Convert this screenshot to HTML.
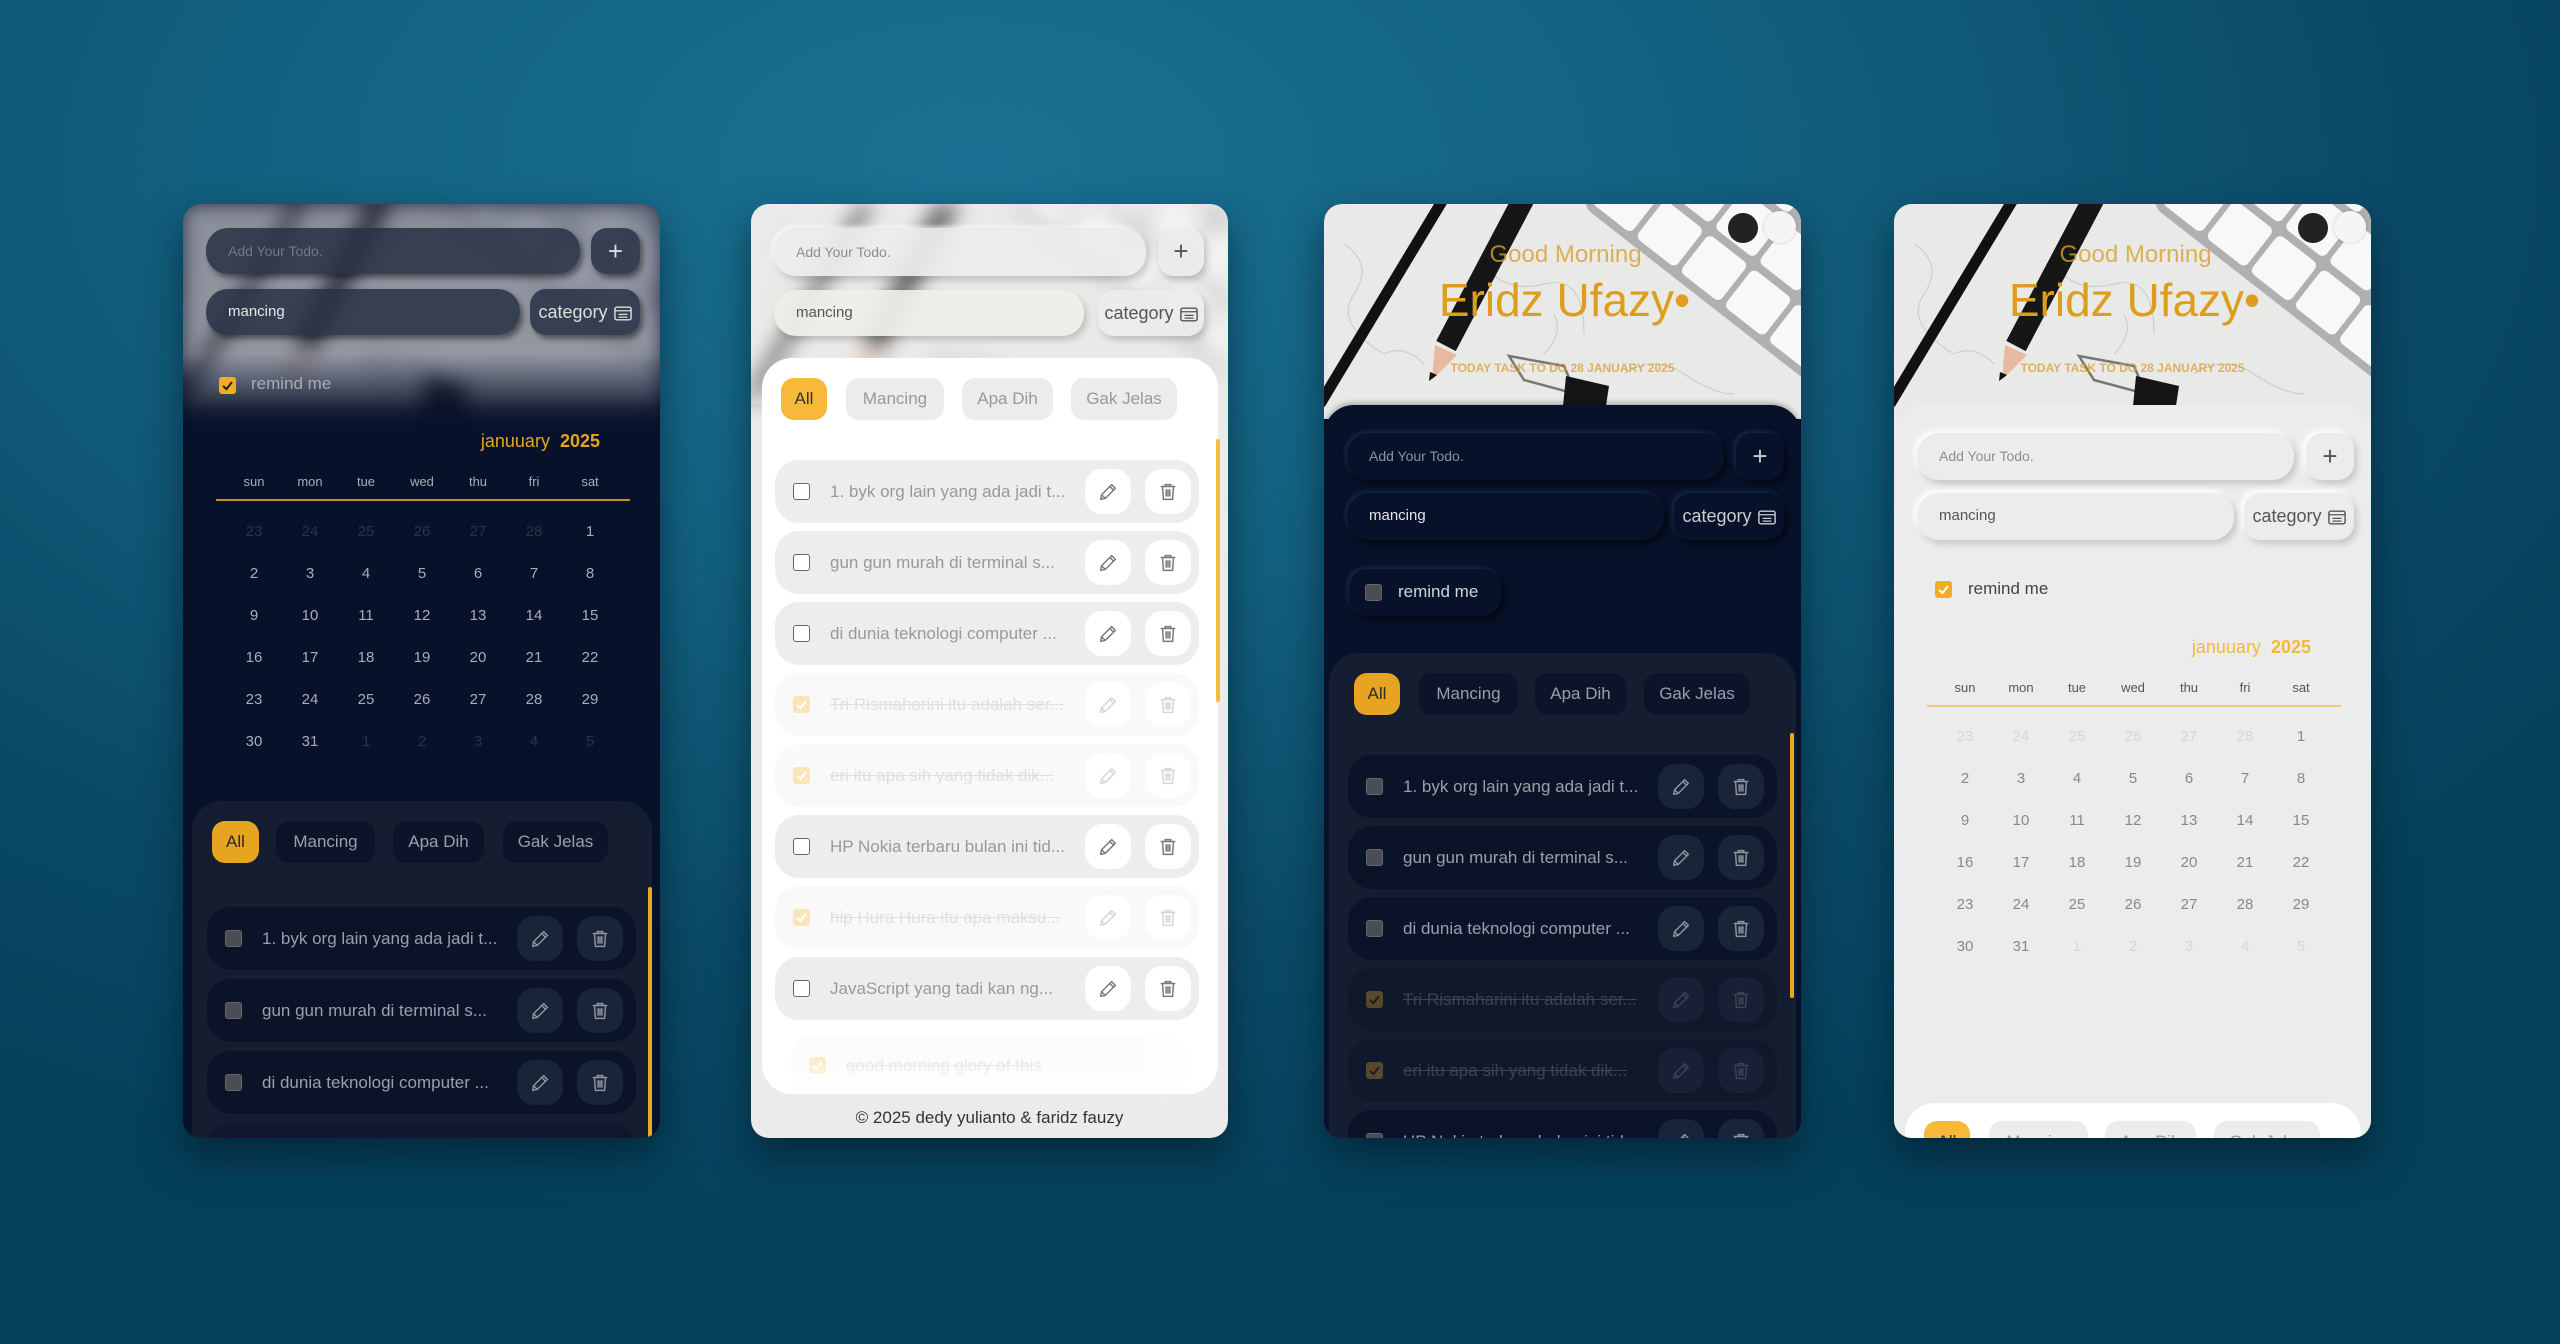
<!DOCTYPE html>
<html><head><meta charset="utf-8">
<style>
*{box-sizing:border-box;margin:0;padding:0}
html,body{width:2560px;height:1344px;overflow:hidden}
body{font-family:"Liberation Sans",sans-serif;background:radial-gradient(ellipse 75% 80% at 38% 12%,#1a7192 0%,#12607f 40%,#0a4a66 75%,#05405a 100%);position:relative}
.card{position:absolute;top:204px;width:477px;height:934px;border-radius:18px;overflow:hidden;box-shadow:0 18px 40px rgba(0,20,35,.55)}
.a{position:absolute}
.inp{position:absolute;border-radius:22px;font-size:14px;line-height:46px;padding-left:22px;height:46px}
.sq{position:absolute;border-radius:16px;height:46px;text-align:center;line-height:46px}
.cat{font-size:18px}
.cat svg{vertical-align:middle;margin-left:6px}
.cb{position:absolute;width:17px;height:17px;border-radius:3px}
.chip{position:absolute;height:42px;border-radius:13px;font-size:17px;line-height:42px;text-align:center}
.it{position:absolute;left:24px;width:429px;height:63px;border-radius:24px}
.it span{position:absolute;left:55px;top:0;line-height:63px;font-size:17px;white-space:nowrap}
.it .cb{left:18px;top:23px}
.bt{position:absolute;top:9px;width:46px;height:45px;border-radius:17px;display:flex;align-items:center;justify-content:center}
.bt.e{left:310px}.bt.d{left:370px}
.done{opacity:.3}
.done span{text-decoration:line-through}
.cal{position:absolute;left:0;width:477px}
.cal .t{position:absolute;right:60px;top:-12px;font-size:18px;line-height:24px}
.cal .wd,.cal .r{position:absolute;left:43px;display:grid;grid-template-columns:repeat(7,56px);text-align:center}
.cal .wd{top:32px;font-size:13px;line-height:18px}
.cal .ln{position:absolute;left:33px;width:414px;height:2px;top:58px}
.cal .r{font-size:15px;line-height:20px}
.hdr{position:absolute;left:0;top:0;width:477px;height:215px}
.gm{position:absolute;left:0;width:477px;text-align:center;color:#d9a02e}
.scr{position:absolute;width:4px;border-radius:2px;background:#e9a822}
</style></head><body>
<svg width="0" height="0" style="position:absolute">
<defs>
<symbol id="photo" viewBox="0 0 477 215">
<rect width="477" height="215" fill="#e9e9e7"/>
<g fill="none" stroke="#bdbdb9" stroke-width="1.2" opacity=".6">
<path d="M20 40 q30 20 10 50 t30 60"/><path d="M160 60 q20 30 60 20 t40 50"/><path d="M300 170 q30-20 60 0 t50 20"/><path d="M60 150 q20-10 40 10"/><path d="M230 110 q10 20 -10 40"/>
</g>
<path d="M-4 200 L120 -6" stroke="#111" stroke-width="11"/>
<path d="M122 142 L200 -6" stroke="#161616" stroke-width="22"/>
<path d="M111 141 L133 151 L108 176 Z" fill="#e8b9a2"/>
<path d="M106 168 L113 171 L105 177 Z" fill="#111"/>
<g transform="translate(256,0) rotate(38)">
<rect x="0" y="-260" width="320" height="260" rx="14" fill="#b0b0b2"/>
<g fill="#f8f8f8">
<rect x="8" y="-56" width="50" height="48" rx="6"/><rect x="64" y="-56" width="50" height="48" rx="6"/><rect x="120" y="-56" width="50" height="48" rx="6"/><rect x="176" y="-56" width="50" height="48" rx="6"/><rect x="232" y="-56" width="50" height="48" rx="6"/>
<rect x="8" y="-112" width="50" height="48" rx="6"/><rect x="64" y="-112" width="50" height="48" rx="6"/><rect x="120" y="-112" width="50" height="48" rx="6"/><rect x="176" y="-112" width="50" height="48" rx="6"/><rect x="232" y="-112" width="50" height="48" rx="6"/>
<rect x="8" y="-168" width="50" height="48" rx="6"/><rect x="64" y="-168" width="50" height="48" rx="6"/><rect x="120" y="-168" width="50" height="48" rx="6"/>
</g></g>
<path d="M185 152 L240 162 L252 190 L200 176 Z" fill="none" stroke="#777" stroke-width="2.5"/>
<path d="M242 172 L285 182 L280 215 L238 212 Z" fill="#151515"/>
</symbol>
<symbol id="pen" viewBox="0 0 24 24"><path d="M4 20 L5 15 L16 4 L20 8 L9 19 Z M14 6 L18 10 M5 15 L9 19" fill="none" stroke="currentColor" stroke-width="1.6" stroke-linejoin="round"/></symbol>
<symbol id="trash" viewBox="0 0 24 24"><path d="M4 6 H20 M9 6 V4 H15 V6 M6 6 L7 20 H17 L18 6 M10 9 V17 M12 9 V17 M14 9 V17" fill="none" stroke="currentColor" stroke-width="1.6"/></symbol>
<symbol id="catic" viewBox="0 0 20 16"><rect x="1" y="1" width="18" height="14" rx="2" fill="none" stroke="currentColor" stroke-width="1.6"/><path d="M1 5 H19 M5 9 H15 M5 12 H15" stroke="currentColor" stroke-width="1.4"/></symbol>
<symbol id="chk" viewBox="0 0 17 17"><rect width="17" height="17" rx="3" fill="#f1ac22"/><path d="M4 9 L7.5 12 L13 5" fill="none" stroke="#fff" stroke-width="2"/></symbol>
<symbol id="chkd" viewBox="0 0 17 17"><rect width="17" height="17" rx="3" fill="#f1ac22"/><path d="M4 9 L7.5 12 L13 5" fill="none" stroke="#222" stroke-width="2"/></symbol>
</defs></svg>

<!-- CARD 1 -->
<div class="card" style="left:183px;background:#07112a">
 <svg class="hdr" viewBox="0 0 477 215" style="filter:blur(10px)"><use href="#photo"/></svg>
 <div class="a" style="left:0;top:0;width:477px;height:300px;background:linear-gradient(180deg,rgba(60,70,92,.55) 0%,rgba(60,70,92,.5) 50%,rgba(7,17,42,.9) 68%,#07112a 75%,#07112a 100%)"></div>
 <div class="inp" style="left:23px;top:24px;width:374px;background:rgba(40,48,68,.85);color:#6f7889;box-shadow:3px 4px 6px rgba(0,0,0,.45)">Add Your Todo.</div>
 <div class="sq" style="left:408px;top:24px;width:49px;background:rgba(40,48,68,.85);color:#ddd;font-size:26px;box-shadow:3px 4px 6px rgba(0,0,0,.45)">+</div>
 <div class="inp" style="left:23px;top:85px;width:314px;background:rgba(40,48,68,.85);color:#e6e6e6;font-size:15px;box-shadow:3px 4px 6px rgba(0,0,0,.45)">mancing</div>
 <div class="sq cat" style="left:347px;top:85px;width:110px;background:rgba(40,48,68,.85);color:#ddd;box-shadow:3px 4px 6px rgba(0,0,0,.45)">category<svg width="18" height="15" style="color:#ddd"><use href="#catic"/></svg></div>
 <svg class="a" style="left:36px;top:173px" width="17" height="17"><use href="#chkd"/></svg>
 <div class="a" style="left:68px;top:168px;font-size:17px;line-height:24px;color:#a6acb6">remind me</div>
 <div class="cal" style="top:237px">
  <div class="t" style="color:#e6a420">januuary&nbsp; <b>2025</b></div>
  <div class="wd" style="color:#a8adb6"><span>sun</span><span>mon</span><span>tue</span><span>wed</span><span>thu</span><span>fri</span><span>sat</span></div>
  <div class="ln" style="background:#c98e1e"></div>
  <div class="r" style="top:81px;color:#2a3348"><span>23</span><span>24</span><span>25</span><span>26</span><span>27</span><span>28</span><span style="color:#a8adb6">1</span></div>
  <div class="r" style="top:123px;color:#a8adb6"><span>2</span><span>3</span><span>4</span><span>5</span><span>6</span><span>7</span><span>8</span></div>
  <div class="r" style="top:165px;color:#a8adb6"><span>9</span><span>10</span><span>11</span><span>12</span><span>13</span><span>14</span><span>15</span></div>
  <div class="r" style="top:207px;color:#a8adb6"><span>16</span><span>17</span><span>18</span><span>19</span><span>20</span><span>21</span><span>22</span></div>
  <div class="r" style="top:249px;color:#a8adb6"><span>23</span><span>24</span><span>25</span><span>26</span><span>27</span><span>28</span><span>29</span></div>
  <div class="r" style="top:291px;color:#2a3348"><span style="color:#a8adb6">30</span><span style="color:#a8adb6">31</span><span>1</span><span>2</span><span>3</span><span>4</span><span>5</span></div>
 </div>
 <div class="a" style="left:9px;top:597px;width:460px;height:400px;border-radius:30px;background:#151e31"></div>
 <div class="chip" style="left:29px;top:617px;width:47px;background:#e6a420;color:#2a2a2a">All</div>
 <div class="chip" style="left:93px;top:617px;width:99px;background:#0b1428;color:#9aa0aa">Mancing</div>
 <div class="chip" style="left:210px;top:617px;width:91px;background:#0b1428;color:#9aa0aa">Apa Dih</div>
 <div class="chip" style="left:320px;top:617px;width:105px;background:#0b1428;color:#9aa0aa">Gak Jelas</div>
 <div class="it" style="top:703px;background:#0a1327"><i class="cb" style="background:#4a4d55;border:1px solid #666"></i><span style="color:#9aa0aa">1. byk org lain yang ada jadi t...</span><b class="bt e" style="background:#1a2438;color:#8e949e"><svg width="22" height="22"><use href="#pen"/></svg></b><b class="bt d" style="background:#1a2438;color:#8e949e"><svg width="22" height="22"><use href="#trash"/></svg></b></div>
 <div class="it" style="top:775px;background:#0a1327"><i class="cb" style="background:#4a4d55;border:1px solid #666"></i><span style="color:#9aa0aa">gun gun murah di terminal s...</span><b class="bt e" style="background:#1a2438;color:#8e949e"><svg width="22" height="22"><use href="#pen"/></svg></b><b class="bt d" style="background:#1a2438;color:#8e949e"><svg width="22" height="22"><use href="#trash"/></svg></b></div>
 <div class="it" style="top:847px;background:#0a1327"><i class="cb" style="background:#4a4d55;border:1px solid #666"></i><span style="color:#9aa0aa">di dunia teknologi computer ...</span><b class="bt e" style="background:#1a2438;color:#8e949e"><svg width="22" height="22"><use href="#pen"/></svg></b><b class="bt d" style="background:#1a2438;color:#8e949e"><svg width="22" height="22"><use href="#trash"/></svg></b></div>
 <div class="it" style="top:919px;background:#0f182c"></div>
 <div class="scr" style="left:465px;top:683px;height:260px"></div>
</div>

<!-- CARD 2 -->
<div class="card" style="left:751px;background:#ebebeb">
 <svg class="hdr" viewBox="0 0 477 215" style="filter:blur(10px)"><use href="#photo"/></svg>
 <div class="a" style="left:0;top:0;width:477px;height:200px;background:rgba(235,235,235,.35)"></div>
 <div class="inp" style="left:23px;top:24px;width:372px;height:48px;line-height:48px;background:rgba(236,236,236,.92);color:#8e8e8e;box-shadow:3px 4px 7px rgba(0,0,0,.18),-2px -2px 4px rgba(255,255,255,.7)">Add Your Todo.</div>
 <div class="sq" style="left:407px;top:24px;width:46px;height:48px;background:rgba(236,236,236,.92);color:#555;font-size:26px;box-shadow:3px 4px 7px rgba(0,0,0,.18)">+</div>
 <div class="inp" style="left:23px;top:86px;width:310px;background:rgba(240,238,232,.92);color:#555;font-size:15px;box-shadow:3px 4px 7px rgba(0,0,0,.18)">mancing</div>
 <div class="sq cat" style="left:347px;top:86px;width:106px;background:rgba(236,236,236,.92);color:#555;box-shadow:3px 4px 7px rgba(0,0,0,.18)">category<svg width="18" height="15" style="color:#555"><use href="#catic"/></svg></div>
 <div class="a" style="left:11px;top:154px;width:456px;height:736px;border-radius:30px;background:#fff"></div>
 <div class="chip" style="left:30px;top:174px;width:46px;background:#f8b93a;color:#333">All</div>
 <div class="chip" style="left:95px;top:174px;width:98px;background:#ececec;color:#999">Mancing</div>
 <div class="chip" style="left:211px;top:174px;width:91px;background:#ececec;color:#999">Apa Dih</div>
 <div class="chip" style="left:320px;top:174px;width:106px;background:#ececec;color:#999">Gak Jelas</div>
 <div class="it" style="top:256px;width:424px;background:#ededed"><i class="cb" style="border:1.5px solid #666;background:#fff"></i><span style="color:#999">1. byk org lain yang ada jadi t...</span><b class="bt e" style="background:#fff;color:#777"><svg width="22" height="22"><use href="#pen"/></svg></b><b class="bt d" style="background:#fff;color:#777"><svg width="22" height="22"><use href="#trash"/></svg></b></div>
 <div class="it" style="top:327px;width:424px;background:#ededed"><i class="cb" style="border:1.5px solid #666;background:#fff"></i><span style="color:#999">gun gun murah di terminal s...</span><b class="bt e" style="background:#fff;color:#777"><svg width="22" height="22"><use href="#pen"/></svg></b><b class="bt d" style="background:#fff;color:#777"><svg width="22" height="22"><use href="#trash"/></svg></b></div>
 <div class="it" style="top:398px;width:424px;background:#ededed"><i class="cb" style="border:1.5px solid #666;background:#fff"></i><span style="color:#999">di dunia teknologi computer ...</span><b class="bt e" style="background:#fff;color:#777"><svg width="22" height="22"><use href="#pen"/></svg></b><b class="bt d" style="background:#fff;color:#777"><svg width="22" height="22"><use href="#trash"/></svg></b></div>
 <div class="it done" style="top:469px;width:424px;background:#ededed"><svg class="cb" style="left:18px;top:23px" width="17" height="17"><use href="#chk"/></svg><span style="color:#999">Tri Rismaharini itu adalah ser...</span><b class="bt e" style="background:#fff;color:#777"><svg width="22" height="22"><use href="#pen"/></svg></b><b class="bt d" style="background:#fff;color:#777"><svg width="22" height="22"><use href="#trash"/></svg></b></div>
 <div class="it done" style="top:540px;width:424px;background:#ededed"><svg class="cb" style="left:18px;top:23px" width="17" height="17"><use href="#chk"/></svg><span style="color:#999">eri itu apa sih yang tidak dik...</span><b class="bt e" style="background:#fff;color:#777"><svg width="22" height="22"><use href="#pen"/></svg></b><b class="bt d" style="background:#fff;color:#777"><svg width="22" height="22"><use href="#trash"/></svg></b></div>
 <div class="it" style="top:611px;width:424px;background:#ededed"><i class="cb" style="border:1.5px solid #666;background:#fff"></i><span style="color:#999">HP Nokia terbaru bulan ini tid...</span><b class="bt e" style="background:#fff;color:#777"><svg width="22" height="22"><use href="#pen"/></svg></b><b class="bt d" style="background:#fff;color:#777"><svg width="22" height="22"><use href="#trash"/></svg></b></div>
 <div class="it done" style="top:682px;width:424px;background:#ededed"><svg class="cb" style="left:18px;top:23px" width="17" height="17"><use href="#chk"/></svg><span style="color:#999">hip Hura Hura itu apa maksu...</span><b class="bt e" style="background:#fff;color:#777"><svg width="22" height="22"><use href="#pen"/></svg></b><b class="bt d" style="background:#fff;color:#777"><svg width="22" height="22"><use href="#trash"/></svg></b></div>
 <div class="it" style="top:753px;width:424px;background:#ededed"><i class="cb" style="border:1.5px solid #666;background:#fff"></i><span style="color:#999">JavaScript yang tadi kan ng...</span><b class="bt e" style="background:#fff;color:#777"><svg width="22" height="22"><use href="#pen"/></svg></b><b class="bt d" style="background:#fff;color:#777"><svg width="22" height="22"><use href="#trash"/></svg></b></div>
 <div class="it done" style="top:830px;left:40px;width:396px;background:#f4f4f4;opacity:.22"><svg class="cb" style="left:18px;top:23px" width="17" height="17"><use href="#chk"/></svg><span style="color:#999">good morning glory of this</span></div>
 <div class="a" style="left:11px;top:860px;width:456px;height:30px;border-radius:0 0 30px 30px;background:linear-gradient(rgba(255,255,255,0),#fff)"></div>
 <div class="scr" style="left:465px;top:235px;height:263px;background:#f5bb3c"></div>
 <div class="a" style="left:0;top:902px;width:477px;text-align:center;font-size:17px;line-height:24px;color:#333">© 2025 dedy yulianto &amp; faridz fauzy</div>
</div>

<!-- CARD 3 -->
<div class="card" style="left:1324px;background:#07112a">
 <svg class="hdr" viewBox="0 0 477 215"><use href="#photo"/></svg>
 <div class="a" style="left:404px;top:9px;width:30px;height:30px;border-radius:50%;background:#222"></div>
 <div class="a" style="left:440px;top:7px;width:32px;height:32px;border-radius:50%;background:#f5f5f5;box-shadow:0 0 3px rgba(0,0,0,.2)"></div>
 <div class="gm" style="top:36px;font-size:24px;line-height:30px;opacity:.8;text-indent:6px">Good Morning</div>
 <div class="gm" style="top:70px;font-size:46px;line-height:52px;color:#dc9e1c;text-indent:4px">Eridz Ufazy•</div>
 <div class="gm" style="top:156px;font-size:12px;line-height:16px;font-weight:bold;opacity:.75">TODAY TASK TO DO 28 JANUARY 2025</div>
 <div class="a" style="left:0;top:201px;width:477px;height:733px;border-radius:30px 30px 0 0;background:#07112a;box-shadow:0 -2px 6px rgba(0,0,0,.3)"></div>
 <div class="inp" style="left:23px;top:229px;width:377px;height:47px;background:#07112a;color:#8a93a3;box-shadow:3px 4px 6px rgba(0,0,0,.6),-2px -2px 4px rgba(40,55,85,.6)">Add Your Todo.</div>
 <div class="sq" style="left:412px;top:229px;width:48px;height:47px;background:#07112a;color:#ccc;font-size:26px;box-shadow:3px 4px 6px rgba(0,0,0,.6),-2px -2px 4px rgba(40,55,85,.6)">+</div>
 <div class="inp" style="left:23px;top:289px;width:317px;height:47px;background:#07112a;color:#e6e6e6;font-size:15px;box-shadow:3px 4px 6px rgba(0,0,0,.6),-2px -2px 4px rgba(40,55,85,.6)">mancing</div>
 <div class="sq cat" style="left:350px;top:289px;width:110px;height:47px;background:#07112a;color:#ccc;box-shadow:3px 4px 6px rgba(0,0,0,.6),-2px -2px 4px rgba(40,55,85,.6)">category<svg width="18" height="15" style="color:#ccc"><use href="#catic"/></svg></div>
 <div class="a" style="left:25px;top:365px;width:152px;height:47px;border-radius:18px;background:#07112a;box-shadow:3px 4px 6px rgba(0,0,0,.6),-2px -2px 4px rgba(40,55,85,.6)"></div>
 <i class="cb" style="left:41px;top:380px;background:#4a4d55;border:1px solid #666"></i>
 <div class="a" style="left:74px;top:376px;font-size:17px;line-height:24px;color:#d0d4da">remind me</div>
 <div class="a" style="left:5px;top:449px;width:467px;height:520px;border-radius:30px;background:#151e31"></div>
 <div class="chip" style="left:30px;top:469px;width:46px;background:#e6a420;color:#2a2a2a">All</div>
 <div class="chip" style="left:95px;top:469px;width:99px;background:#0b1428;color:#9aa0aa">Mancing</div>
 <div class="chip" style="left:211px;top:469px;width:91px;background:#0b1428;color:#9aa0aa">Apa Dih</div>
 <div class="chip" style="left:320px;top:469px;width:106px;background:#0b1428;color:#9aa0aa">Gak Jelas</div>
 <div class="it" style="top:551px;background:#0a1327"><i class="cb" style="background:#4a4d55;border:1px solid #666"></i><span style="color:#9aa0aa">1. byk org lain yang ada jadi t...</span><b class="bt e" style="background:#1a2438;color:#8e949e"><svg width="22" height="22"><use href="#pen"/></svg></b><b class="bt d" style="background:#1a2438;color:#8e949e"><svg width="22" height="22"><use href="#trash"/></svg></b></div>
 <div class="it" style="top:622px;background:#0a1327"><i class="cb" style="background:#4a4d55;border:1px solid #666"></i><span style="color:#9aa0aa">gun gun murah di terminal s...</span><b class="bt e" style="background:#1a2438;color:#8e949e"><svg width="22" height="22"><use href="#pen"/></svg></b><b class="bt d" style="background:#1a2438;color:#8e949e"><svg width="22" height="22"><use href="#trash"/></svg></b></div>
 <div class="it" style="top:693px;background:#0a1327"><i class="cb" style="background:#4a4d55;border:1px solid #666"></i><span style="color:#9aa0aa">di dunia teknologi computer ...</span><b class="bt e" style="background:#1a2438;color:#8e949e"><svg width="22" height="22"><use href="#pen"/></svg></b><b class="bt d" style="background:#1a2438;color:#8e949e"><svg width="22" height="22"><use href="#trash"/></svg></b></div>
 <div class="it done" style="top:764px;background:#0a1327;opacity:.45"><svg class="cb" style="left:18px;top:23px;opacity:.7" width="17" height="17"><use href="#chkd"/></svg><span style="color:#6a707a">Tri Rismaharini itu adalah ser...</span><b class="bt e" style="background:#1a2438;color:#6a707a"><svg width="22" height="22"><use href="#pen"/></svg></b><b class="bt d" style="background:#1a2438;color:#6a707a"><svg width="22" height="22"><use href="#trash"/></svg></b></div>
 <div class="it done" style="top:835px;background:#0a1327;opacity:.45"><svg class="cb" style="left:18px;top:23px;opacity:.7" width="17" height="17"><use href="#chkd"/></svg><span style="color:#6a707a">eri itu apa sih yang tidak dik...</span><b class="bt e" style="background:#1a2438;color:#6a707a"><svg width="22" height="22"><use href="#pen"/></svg></b><b class="bt d" style="background:#1a2438;color:#6a707a"><svg width="22" height="22"><use href="#trash"/></svg></b></div>
 <div class="it" style="top:906px;background:#0a1327"><i class="cb" style="background:#4a4d55;border:1px solid #666"></i><span style="color:#9aa0aa">HP Nokia terbaru bulan ini tid...</span><b class="bt e" style="background:#1a2438;color:#8e949e"><svg width="22" height="22"><use href="#pen"/></svg></b><b class="bt d" style="background:#1a2438;color:#8e949e"><svg width="22" height="22"><use href="#trash"/></svg></b></div>
 <div class="scr" style="left:466px;top:529px;height:265px"></div>
</div>

<!-- CARD 4 -->
<div class="card" style="left:1894px;background:#ececec">
 <svg class="hdr" viewBox="0 0 477 215"><use href="#photo"/></svg>
 <div class="a" style="left:404px;top:9px;width:30px;height:30px;border-radius:50%;background:#222"></div>
 <div class="a" style="left:440px;top:7px;width:32px;height:32px;border-radius:50%;background:#f5f5f5;box-shadow:0 0 3px rgba(0,0,0,.2)"></div>
 <div class="gm" style="top:36px;font-size:24px;line-height:30px;opacity:.8;text-indent:6px">Good Morning</div>
 <div class="gm" style="top:70px;font-size:46px;line-height:52px;color:#dc9e1c;text-indent:4px">Eridz Ufazy•</div>
 <div class="gm" style="top:156px;font-size:12px;line-height:16px;font-weight:bold;opacity:.75">TODAY TASK TO DO 28 JANUARY 2025</div>
 <div class="a" style="left:0;top:201px;width:477px;height:733px;border-radius:30px 30px 0 0;background:#ececec"></div>
 <div class="inp" style="left:23px;top:229px;width:377px;height:47px;background:#ececec;color:#8e8e8e;box-shadow:3px 4px 7px rgba(0,0,0,.16),-3px -3px 6px #fff">Add Your Todo.</div>
 <div class="sq" style="left:412px;top:229px;width:48px;height:47px;background:#ececec;color:#555;font-size:26px;box-shadow:3px 4px 7px rgba(0,0,0,.16),-3px -3px 6px #fff">+</div>
 <div class="inp" style="left:23px;top:289px;width:317px;height:47px;background:#ececec;color:#555;font-size:15px;box-shadow:3px 4px 7px rgba(0,0,0,.16),-3px -3px 6px #fff">mancing</div>
 <div class="sq cat" style="left:350px;top:289px;width:110px;height:47px;background:#ececec;color:#555;box-shadow:3px 4px 7px rgba(0,0,0,.16),-3px -3px 6px #fff">category<svg width="18" height="15" style="color:#555"><use href="#catic"/></svg></div>
 <svg class="a" style="left:41px;top:377px" width="17" height="17"><use href="#chk"/></svg>
 <div class="a" style="left:74px;top:373px;font-size:17px;line-height:24px;color:#444">remind me</div>
 <div class="cal" style="top:443px">
  <div class="t" style="color:#f5b935">januuary&nbsp; <b>2025</b></div>
  <div class="wd" style="color:#555"><span>sun</span><span>mon</span><span>tue</span><span>wed</span><span>thu</span><span>fri</span><span>sat</span></div>
  <div class="ln" style="background:#f3c774;height:1.5px"></div>
  <div class="r" style="top:80px;color:#d6d6d6"><span>23</span><span>24</span><span>25</span><span>26</span><span>27</span><span>28</span><span style="color:#888">1</span></div>
  <div class="r" style="top:122px;color:#888"><span>2</span><span>3</span><span>4</span><span>5</span><span>6</span><span>7</span><span>8</span></div>
  <div class="r" style="top:164px;color:#888"><span>9</span><span>10</span><span>11</span><span>12</span><span>13</span><span>14</span><span>15</span></div>
  <div class="r" style="top:206px;color:#888"><span>16</span><span>17</span><span>18</span><span>19</span><span>20</span><span>21</span><span>22</span></div>
  <div class="r" style="top:248px;color:#888"><span>23</span><span>24</span><span>25</span><span>26</span><span>27</span><span>28</span><span>29</span></div>
  <div class="r" style="top:290px;color:#d6d6d6"><span style="color:#888">30</span><span style="color:#888">31</span><span>1</span><span>2</span><span>3</span><span>4</span><span>5</span></div>
 </div>
 <div class="a" style="left:11px;top:899px;width:456px;height:120px;border-radius:30px;background:#fff"></div>
 <div class="chip" style="left:30px;top:917px;width:46px;background:#f8b93a;color:#333">All</div>
 <div class="chip" style="left:95px;top:917px;width:99px;background:#ececec;color:#999">Mancing</div>
 <div class="chip" style="left:211px;top:917px;width:91px;background:#ececec;color:#999">Apa Dih</div>
 <div class="chip" style="left:320px;top:917px;width:106px;background:#ececec;color:#999">Gak Jelas</div>
</div>
</body></html>
